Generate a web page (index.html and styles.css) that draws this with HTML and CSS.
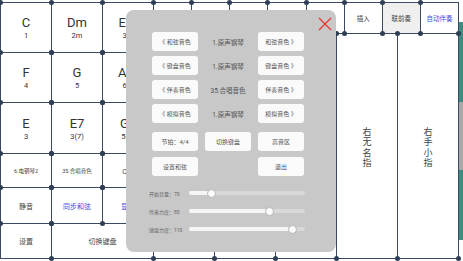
FILE: index.html
```html
<!DOCTYPE html>
<html lang="zh">
<head>
<meta charset="utf-8">
<title>伴奏键盘</title>
<link rel="stylesheet" href="styles.css">
</head>
<body>
<div class="app">
  <div class="chords">
    <div class="cell"><span class="big">C</span><span class="sub">1</span></div>
    <div class="cell"><span class="big">Dm</span><span class="sub">2m</span></div>
    <div class="cell"><span class="big">Em</span><span class="sub">3m</span></div>
    <div class="cell"><span class="big">F</span><span class="sub">4</span></div>
    <div class="cell"><span class="big">G</span><span class="sub">5</span></div>
    <div class="cell"><span class="big">Am</span><span class="sub">6m</span></div>
    <div class="cell"><span class="big">E</span><span class="sub">3</span></div>
    <div class="cell"><span class="big">E7</span><span class="sub">3(7)</span></div>
    <div class="cell"><span class="big">G7</span><span class="sub">5(7)</span></div>
    <div class="cell tiny">6.电钢琴2</div>
    <div class="cell tiny">35.合唱音色</div>
    <div class="cell small">C调</div>
    <div class="cell small">静音</div>
    <div class="cell small blue">同步和弦</div>
    <div class="cell small blue">显示</div>
    <div class="cell small">设置</div>
    <div class="cell small wide">切换键盘</div>
  </div>
  <div class="right">
    <div class="toprow">
      <div class="tb"></div>
      <div class="tb"></div>
      <div class="tb"></div>
      <div class="tb"></div>
      <div class="tb"></div>
      <div class="tb">插入</div>
      <div class="tb grey">联前奏</div>
      <div class="tb blue">自动伴奏</div>
    </div>
    <div class="fingers">
      <div class="finger"></div>
      <div class="finger"></div>
      <div class="finger"></div>
      <div class="finger"><span class="vt">右无名指</span></div>
      <div class="finger"><span class="vt">右手小指</span></div>
    </div>
  </div>
  <div class="strip"></div>

  <div class="modal">
    <svg class="close" width="14" height="14" viewBox="0 0 14 14">
      <path d="M1 1 L13 13 M13 1 L1 13" stroke="#e23a32" stroke-width="1.4" fill="none"/>
    </svg>
    <div class="mgrid">
      <div class="mbtn">《 和弦音色</div>
      <div class="mtext">1.原声钢琴</div>
      <div class="mbtn">和弦音色 》</div>
      <div class="mbtn">《 键盘音色</div>
      <div class="mtext">1.原声钢琴</div>
      <div class="mbtn">键盘音色 》</div>
      <div class="mbtn">《 伴奏音色</div>
      <div class="mtext">35.合唱音色</div>
      <div class="mbtn">伴奏音色 》</div>
      <div class="mbtn">《 模拟音色</div>
      <div class="mtext">1.原声钢琴</div>
      <div class="mbtn">模拟音色 》</div>
    </div>
    <div class="mgrid second">
      <div class="mbtn">节拍：4/4</div>
      <div class="mbtn">切换键盘</div>
      <div class="mbtn">高音区</div>
      <div class="mbtn">设置和弦</div>
      <div class="mempty"></div>
      <div class="mbtn">退出</div>
    </div>
    <div class="sliders">
      <div class="srow">
        <span class="slabel">开始音量：70</span>
        <div class="track"><div class="fill" style="width:22px"></div><span class="thumb" style="left:22px"></span></div>
      </div>
      <div class="srow">
        <span class="slabel">伴奏力度：85</span>
        <div class="track"><div class="fill" style="width:80px"></div><span class="thumb" style="left:80px"></span></div>
      </div>
      <div class="srow">
        <span class="slabel">键盘力度：110</span>
        <div class="track"><div class="fill" style="width:103px"></div><span class="thumb" style="left:103px"></span></div>
      </div>
    </div>
  </div>
</div>
</body>
</html>
```
FILE: styles.css
```css
* { box-sizing: border-box; margin: 0; padding: 0; }
html, body { width: 463px; height: 261px; overflow: hidden; background: #fff; }
body { font-family: Roboto, "Noto Sans CJK SC", sans-serif; color: #333; }

.app { position: relative; display: flex; align-items: flex-start; padding-top: 2px; height: 261px; }

.chords {
  display: grid;
  grid-template-columns: 51px 51px 51px;
  grid-template-rows: 50px 50px 51px 34px 36px 35px;
  border-top: 1px solid #3b4a60;
  border-left: 1px solid #3b4a60;
}
.cell {
  position: relative;
  border-right: 1px solid #3b4a60;
  border-bottom: 1px solid #3b4a60;
  display: flex; flex-direction: column; align-items: center; justify-content: center;
  background: #fff;
  color: #333;
}
.cell::before, .tb::before, .finger::before {
  content: ""; position: absolute; left: -3px; top: -3px; width: 5px; height: 5px;
  border-radius: 50%; background: #2d3e55; z-index: 1;
}
.cell::after, .tb::after, .finger::after {
  content: ""; position: absolute; right: -3px; bottom: -3px; width: 5px; height: 5px;
  border-radius: 50%; background: #2d3e55; z-index: 1;
}
.big { font-size: 13px; line-height: 15px; }
.sub { font-size: 7.5px; line-height: 9px; margin-top: 1px; }
.tiny { font-size: 5.5px; color: #444; }
.small { font-size: 7px; color: #444; }
.blue { color: #4a4ad6; }
.wide { grid-column: span 2; }

.right {
  width: 306px;
  border-top: 1px solid #3b4a60;
  display: flex; flex-direction: column;
}
.toprow { display: flex; height: 31px; }
.tb {
  position: relative; flex: 1;
  border-right: 1px solid #3b4a60; border-bottom: 1px solid #3b4a60;
  display: flex; align-items: center; justify-content: center;
  font-size: 6.5px; color: #444; background: #fff;
}
.tb.grey { background: #efefef; }
.tb.blue { color: #4a4ad6; }
.fingers { display: flex; height: 225px; }
.finger {
  position: relative; flex: 1;
  border-right: 1px solid #3b4a60; border-bottom: 1px solid #3b4a60;
  display: flex; align-items: center; justify-content: center;
  background: #fff;
}
.vt {
  display: block; width: 9px;
  font-family: "Noto Sans CJK SC", sans-serif;
  font-size: 9px; line-height: 10.5px; color: #444;
  word-break: break-all; line-break: anywhere; text-align: center;
  margin-top: 3px;
}

.strip {
  width: 4px; height: 218px; margin-top: 20px;
  background: linear-gradient(#3f8c80 0, #3f8c80 80px, #a8a8a8 80px, #a8a8a8 148px, #3f8c80 148px);
}

.modal {
  position: absolute; left: 126px; top: 10px; width: 210px; height: 242px;
  background: #c8c8c8; border-radius: 8px; z-index: 5;
  padding: 22px 0 0 26px;
}
.close { position: absolute; right: 4px; top: 7px; }
.mgrid {
  display: grid; grid-template-columns: 46px 46px 46px; column-gap: 7px;
  grid-auto-rows: 19px; row-gap: 5px;
}
.mgrid.second { margin-top: 9px; row-gap: 6px; }
.mbtn {
  background: #fafafa; border-radius: 3px;
  display: flex; align-items: center; justify-content: center;
  font-size: 6px; color: #555; white-space: nowrap;
}
.mtext { display: flex; align-items: center; justify-content: center; font-size: 6.5px; color: #555; white-space: nowrap; }

.sliders { margin-top: 8px; margin-left: -3px; }
.srow { display: flex; align-items: center; height: 18px; }
.slabel { width: 40px; font-size: 5px; color: #666; white-space: nowrap; }
.track { position: relative; width: 116px; height: 4px; border-radius: 2px; background: #d9d9d9; }
.fill { height: 4px; border-radius: 2px; background: #f5f5f5; }
.thumb {
  position: absolute; top: -2.5px; width: 9px; height: 9px; margin-left: -4.5px;
  border-radius: 50%; background: #fbfbfb; border: 1px solid #b5b5b5;
}
```
